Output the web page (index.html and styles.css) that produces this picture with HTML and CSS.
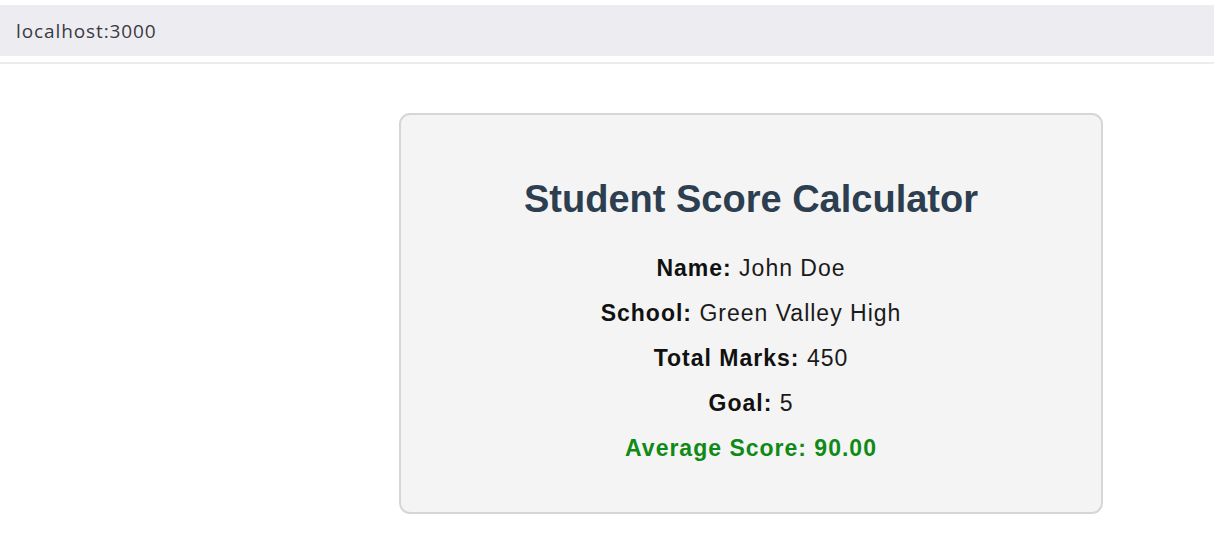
FILE: index.html
```html
<!DOCTYPE html>
<html>
<head>
<meta charset="utf-8">
<link rel="stylesheet" href="styles.css">
</head>
<body>
<div class="addressbar"><span class="url">localhost:3000</span></div>
<div class="divider"></div>
<main class="page">
  <section class="card">
    <h1 class="title">Student Score Calculator</h1>
    <p class="row"><strong>Name:</strong> John Doe</p>
    <p class="row"><strong>School:</strong> Green Valley High</p>
    <p class="row"><strong>Total Marks:</strong> 450</p>
    <p class="row"><strong>Goal:</strong> 5</p>
    <p class="row avg"><strong>Average Score: 90.00</strong></p>
  </section>
</main>
</body>
</html>
```
FILE: styles.css
```css
html, body {
  margin: 0;
  padding: 0;
  background: #ffffff;
}
body {
  padding-top: 5px;
  font-family: "Liberation Sans", Arial, sans-serif;
}
.addressbar {
  height: 51px;
  background: #ededf1;
  display: flex;
  align-items: center;
  padding-left: 16px;
}
.url {
  font-family: "Open Sans", "Noto Sans", sans-serif;
  font-size: 19px;
  color: #3a3a44;
  letter-spacing: 0.9px;
}
.divider {
  margin-top: 6px;
  height: 2px;
  background: #ececf0;
}
.page {
  padding-top: 49px;
  padding-left: 399px;
}
.card {
  box-sizing: border-box;
  width: 704px;
  height: 401px;
  background: #f4f4f4;
  border: 2px solid #d6d6d6;
  border-radius: 11px;
  text-align: center;
  padding-top: 62px;
}
.title {
  margin: 0 0 25px;
  font-size: 38px;
  line-height: 44px;
  font-weight: bold;
  color: #2c3e50;
}
.row {
  margin: 0;
  font-size: 23px;
  line-height: 45px;
  letter-spacing: 1px;
  color: #1a1a1a;
}
.row strong {
  color: #111;
}
.avg, .avg strong {
  color: #0f8a16;
}
```
